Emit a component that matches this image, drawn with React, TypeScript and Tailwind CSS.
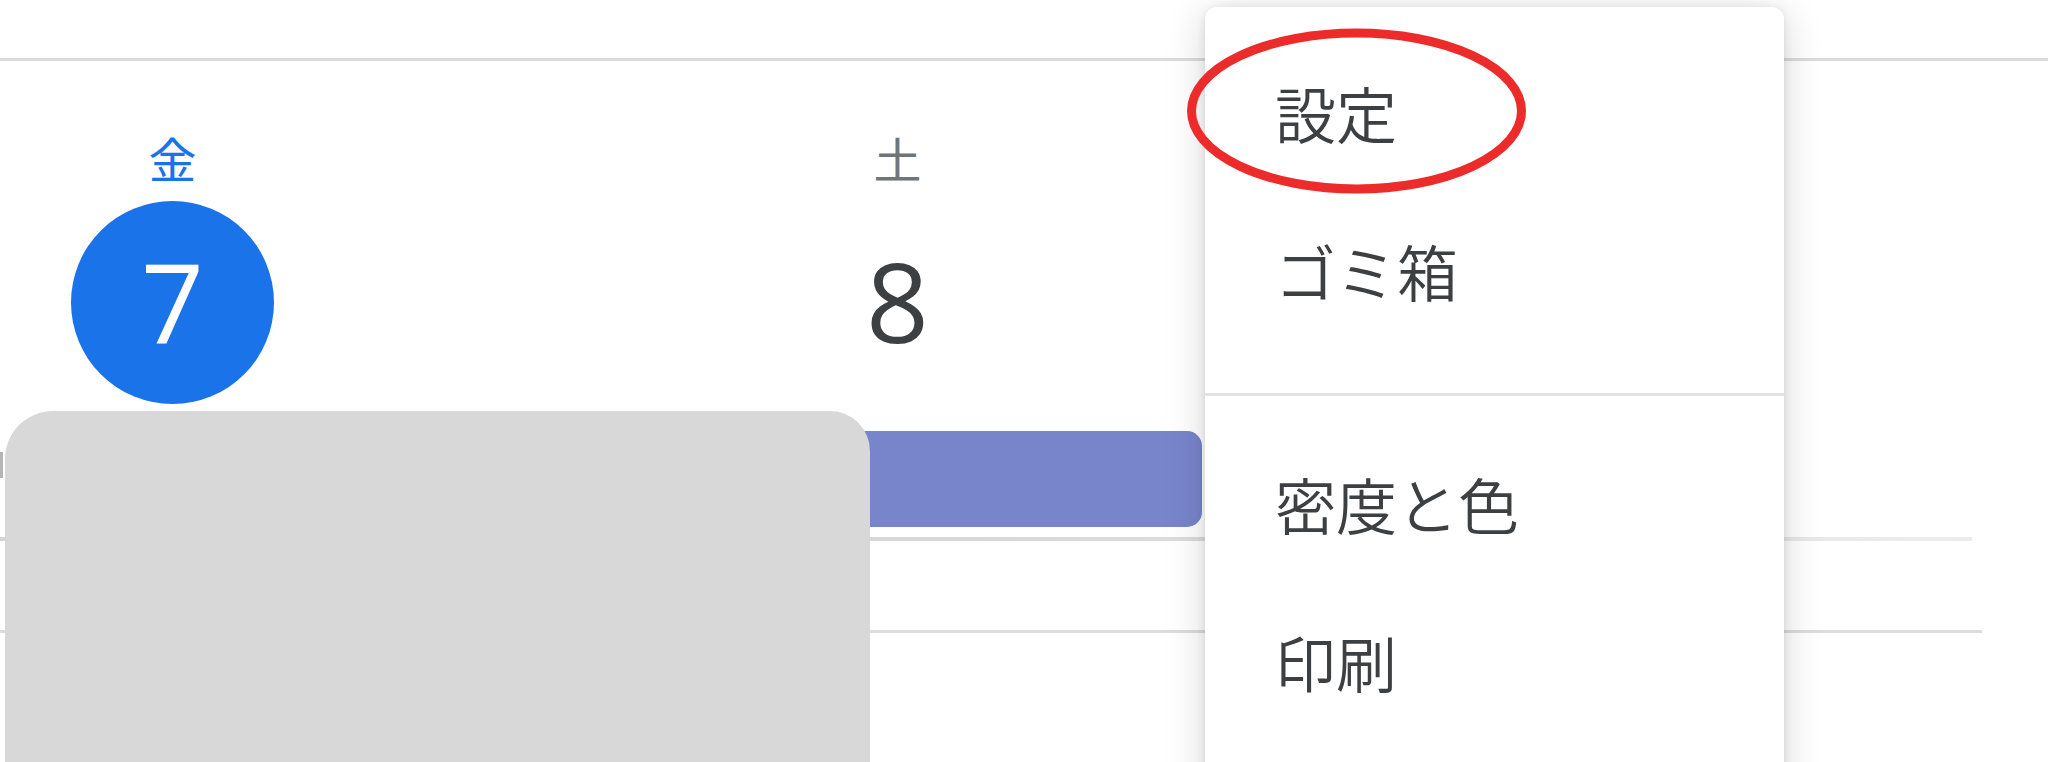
import React from "react";

const cjk = "Roboto, 'Noto Sans CJK JP', 'Noto Sans', sans-serif";

function DayColumn({ name, date, today }: { name: string; date: string; today?: boolean }) {
  return (
    <div className="flex w-[725px] shrink-0 flex-col items-center">
      <div
        className={`text-[48px] leading-[52px] ${today ? "text-[#1a73e8]" : "text-[#70757a]"}`}
        style={{ fontFamily: cjk }}
      >
        {name}
      </div>
      <div
        className={`mt-[13px] flex h-[203px] w-[203px] items-center justify-center rounded-full text-[110px] font-normal leading-none ${
          today ? "bg-[#1a73e8] text-white" : "text-[#3c4043]"
        }`}
        style={{ fontFamily: "'Open Sans', Roboto, 'Noto Sans', sans-serif" }}
      >
        <span className="pb-[6px]">{date}</span>
      </div>
    </div>
  );
}

function MenuItem({ label }: { label: string }) {
  return (
    <div
      className="flex h-[158px] items-center pl-[70px] pt-[8px] text-[61px] font-[350] text-[#3c4043]"
      style={{ fontFamily: cjk }}
    >
      {label}
    </div>
  );
}

export default function App() {
  return (
    <div className="relative h-[762px] w-[2048px] overflow-hidden bg-white">
      {/* top toolbar area with bottom rule */}
      <div className="h-[61px] border-b-[3px] border-[#dcdcdc]" />

      {/* day header row */}
      <div className="ml-[-190px] flex pt-[75px]">
        <DayColumn name="金" date="7" today />
        <DayColumn name="土" date="8" />
      </div>

      {/* all-day event row */}
      <div className="ml-[60px] mt-[27px] h-[96px] w-[1142px] rounded-r-[15px] bg-[#7885cb]" />
      <div className="mt-[10px] h-[4px] w-[1972px] bg-gradient-to-r from-[#d4d4d4] via-[#d8d8d8] to-[#ececec]" />
      <div className="h-[89px]" />
      <div className="h-[3px] w-[1982px] bg-[#dcdcdc]" />

      {/* redaction blob */}
      <div className="absolute left-[5px] top-[411px] h-[400px] w-[865px] rounded-tl-[48px] rounded-tr-[40px] rounded-bl-[40px] bg-[#d8d8d8]" />
      <div className="absolute left-0 top-[452px] h-[26px] w-[3px] bg-[#6b6b6b] opacity-50" />

      {/* dropdown menu */}
      <div className="absolute left-[1205px] top-[7px] h-[820px] w-[579px] rounded-[12px] bg-white shadow-[0_6px_40px_rgba(0,0,0,0.16),0_2px_10px_rgba(0,0,0,0.10)]">
        <div className="pt-[29px]">
          <MenuItem label="設定" />
          <MenuItem label="ゴミ箱" />
          <div className="mt-[41px] h-[3px] bg-[#e2e2e2]" />
          <div className="mt-[31px]">
            <MenuItem label="密度と色" />
            <MenuItem label="印刷" />
          </div>
        </div>
      </div>

      {/* red annotation ellipse */}
      <svg className="absolute left-0 top-0" width="2048" height="762" viewBox="0 0 2048 762" fill="none">
        <ellipse cx="1356.5" cy="111" rx="165" ry="78" stroke="#ec2b2b" strokeWidth="9" />
      </svg>
    </div>
  );
}
